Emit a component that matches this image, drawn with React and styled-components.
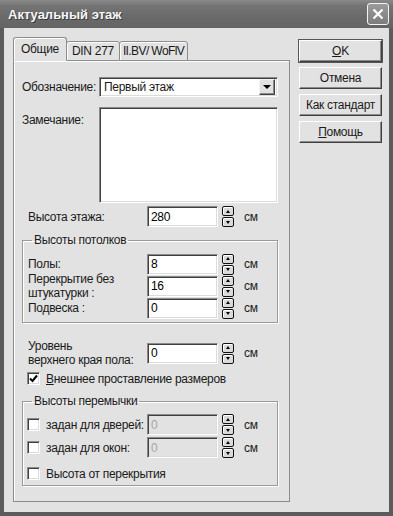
import React from 'react';
import styled, {createGlobalStyle} from 'styled-components';

const bg = '#e2e2e2';
const font = '"Liberation Sans", Arial, sans-serif';

const GlobalStyle = createGlobalStyle`
  html, body {
    margin: 0;
    padding: 0;
    background: #ffffff;
  }
  * {
    box-sizing: border-box;
  }
`;

const Window = styled.div`
  width: 393px;
  height: 516px;
  display: flex;
  flex-direction: column;
  background: #5c5c5c;
  font-family: ${font};
  font-size: 12px;
  letter-spacing: -0.3px;
  color: #1a1a1a;
  overflow: hidden;
`;

const TitleBar = styled.div`
  height: 28px;
  flex: none;
  display: flex;
  align-items: center;
  justify-content: space-between;
  padding: 0 4px 0 8px;
  background: linear-gradient(#8a8a8a 0%, #747474 20%, #6a6a6a 60%, #646464 100%);
`;

const Title = styled.div`
  font-weight: bold;
  font-size: 13px;
  letter-spacing: 0;
  color: #f6f6f6;
  text-shadow: 1px 1px 0 #3c3c3c;
`;

const CloseButton = styled.div`
  width: 22px;
  height: 22px;
  border: 1px solid #f4f4f4;
  border-radius: 3px;
  background: linear-gradient(#9a9a9a, #7c7c7c);
  display: flex;
  align-items: center;
  justify-content: center;
`;

const Client = styled.div`
  flex: 1;
  margin: 0 4px 4px 4px;
  background: ${bg};
  display: flex;
  gap: 9px;
  padding: 10px 7px 10px 9px;
`;

const TabArea = styled.div`
  width: 277px;
  display: flex;
  flex-direction: column;
`;

const TabStrip = styled.div`
  display: flex;
  align-items: flex-end;
  height: 23px;
  position: relative;
  z-index: 1;
  margin-bottom: -1px;
`;

const Tab = styled.div`
  height: ${p => (p.$active ? '24px' : '20px')};
  padding: 0 ${p => p.$px}px;
  margin-left: ${p => (p.$active ? '0' : '-1px')};
  display: flex;
  align-items: center;
  letter-spacing: ${p => p.$ls || '-0.3px'};
  background: ${bg};
  border: 1px solid #8c8c8c;
  border-bottom: ${p => (p.$active ? `1px solid ${bg}` : '1px solid #8c8c8c')};
  border-radius: 3px 3px 0 0;
  box-shadow: inset 1px 1px 0 #ffffff;
`;

const Panel = styled.div`
  flex: 1;
  border: 1px solid #8c8c8c;
  box-shadow: inset 1px 1px 0 #ffffff;
  padding: 16px 11px 0 8px;
  display: flex;
  flex-direction: column;
`;

const TopRow = styled.div`
  display: flex;
  align-items: ${p => (p.$top ? 'flex-start' : 'center')};
  margin-top: ${p => p.$mt || 0}px;
`;

const TopLabel = styled.div`
  width: 77px;
  flex: none;
  padding-top: ${p => (p.$top ? '6px' : '0')};
`;

const sunken = `
  border: 1px solid;
  border-color: #8a8a8a #ffffff #ffffff #8a8a8a;
  box-shadow: inset 1px 1px 0 #404040, inset -1px -1px 0 #dcdcdc;
`;

const Select = styled.div`
  flex: 1;
  height: 20px;
  ${sunken};
  background: #fff;
  display: flex;
  align-items: center;
  justify-content: space-between;
  padding: 0 2px 0 4px;
`;

const DropButton = styled.div`
  width: 16px;
  height: 16px;
  background: ${bg};
  border: 1px solid;
  border-color: #f4f4f4 #404040 #404040 #f4f4f4;
  box-shadow: inset -1px -1px 0 #8a8a8a;
  display: flex;
  align-items: center;
  justify-content: center;
  &::after {
    content: '';
    border-left: 4px solid transparent;
    border-right: 4px solid transparent;
    border-top: 4px solid #000;
  }
`;

const NoteBox = styled.div`
  flex: 1;
  height: 96px;
  ${sunken};
  background: #fff;
`;

const Row = styled.div`
  display: flex;
  align-items: center;
  height: ${p => p.$h || 21}px;
  margin-top: ${p => p.$mt || 0}px;
`;

const Label = styled.div`
  width: ${p => p.$w || 119}px;
  padding-left: ${p => p.$pl || 0}px;
  flex: none;
  line-height: ${p => p.$lh || 14}px;
`;

const NumInput = styled.div`
  width: 71px;
  height: 21px;
  ${sunken};
  background: ${p => (p.$disabled ? bg : '#fff')};
  color: ${p => (p.$disabled ? '#a6a6a6' : '#000')};
  padding: 0 3px;
  display: flex;
  align-items: center;
`;

const Spinner = styled.div`
  width: 12px;
  height: 21px;
  margin-left: 4px;
  display: flex;
  flex-direction: column;
  gap: 1px;
`;

const SpinHalf = styled.div`
  flex: 1;
  background: #dadada;
  border: 1px solid #111;
  border-radius: 2px;
  box-shadow: inset 1px 1px 0 #ffffff;
  display: flex;
  align-items: center;
  justify-content: center;
  &::after {
    content: '';
    border-left: 2px solid transparent;
    border-right: 2px solid transparent;
    ${p => (p.$down ? 'border-top: 3px solid #000;' : 'border-bottom: 3px solid #000;')}
  }
`;

const Unit = styled.span`
  margin-left: 10px;
`;

const Group = styled.fieldset`
  margin: ${p => p.$mt}px 0 0 0;
  padding: 6px 4px ${p => p.$pb}px 4px;
  border: 1px solid #9a9a9a;
  box-shadow: inset 1px 1px 0 #ffffff, 1px 1px 0 #ffffff;
  min-width: 0;
`;

const Legend = styled.legend`
  padding: 0 2px;
  margin-left: 5px;
  line-height: 14px;
`;

const CheckRow = styled.div`
  display: flex;
  align-items: center;
  height: ${p => p.$h || 13}px;
  margin-top: ${p => p.$mt || 0}px;
  padding-left: ${p => p.$pl || 0}px;
`;

const Box = styled.div`
  width: 13px;
  height: 13px;
  flex: none;
  ${sunken};
  background: #fff;
  display: flex;
  align-items: center;
  justify-content: center;
`;

const CheckLabel = styled.div`
  margin-left: 6px;
  width: ${p => (p.$w ? `${p.$w}px` : 'auto')};
  flex: none;
`;

const Buttons = styled.div`
  width: 83px;
  display: flex;
  flex-direction: column;
  gap: 5px;
  padding-top: 2px;
`;

const Button = styled.div`
  height: 22px;
  background: ${bg};
  border: 1px solid;
  border-color: #ffffff #404040 #404040 #ffffff;
  box-shadow: inset -1px -1px 0 #8a8a8a, ${p => (p.$default ? '0 0 0 1px #555' : '0 0 0 0 transparent')};
  display: flex;
  align-items: center;
  justify-content: center;
`;

const U = styled.span`
  text-decoration: underline;
`;

function Spin() {
  return (
    <Spinner>
      <SpinHalf />
      <SpinHalf $down />
    </Spinner>
  );
}

function Check({checked}) {
  return (
    <Box>
      {checked && (
        <svg width="9" height="9" viewBox="0 0 9 9">
          <path d="M1 4.5 L3.5 7 L8 1.5" stroke="#000" strokeWidth="2" fill="none" />
        </svg>
      )}
    </Box>
  );
}

function NumberField({label, value, disabled, w, pl, h, lh, mt}) {
  return (
    <Row $h={h} $mt={mt}>
      <Label $w={w} $pl={pl} $lh={lh}>{label}</Label>
      <NumInput $disabled={disabled}>{value}</NumInput>
      <Spin />
      <Unit>см</Unit>
    </Row>
  );
}

export default function App() {
  return (
    <>
      <GlobalStyle />
      <Window>
        <TitleBar>
          <Title>Актуальный этаж</Title>
          <CloseButton>
            <svg width="12" height="12" viewBox="0 0 12 12">
              <path d="M1.5 1.5 L10.5 10.5 M10.5 1.5 L1.5 10.5" stroke="#fff" strokeWidth="2.2" />
            </svg>
          </CloseButton>
        </TitleBar>
        <Client>
          <TabArea>
            <TabStrip>
              <Tab $active $px={7}>Общие</Tab>
              <Tab $px={5}>DIN 277</Tab>
              <Tab $px={3} $ls="-0.6px">II.BV/ WoFlV</Tab>
            </TabStrip>
            <Panel>
              <TopRow>
                <TopLabel>Обозначение:</TopLabel>
                <Select>
                  <span>Первый этаж</span>
                  <DropButton />
                </Select>
              </TopRow>
              <TopRow $top $mt={10}>
                <TopLabel $top>Замечание:</TopLabel>
                <NoteBox />
              </TopRow>
              <NumberField label="Высота этажа:" value="280" w={125} pl={6} mt={3} />

              <Group $mt={6} $pb={3}>
                <Legend>Высоты потолков</Legend>
                <NumberField label="Полы:" value="8" w={120} pl={1} h={22} />
                <NumberField
                  label={<>Перекрытие без<br />штукатурки :</>}
                  value="16" w={120} pl={1} h={22} lh={14}
                />
                <NumberField label="Подвеска :" value="0" w={120} pl={1} h={22} />
              </Group>

              <NumberField
                label={<>Уровень<br />верхнего края пола:</>}
                value="0" w={125} pl={6} h={26} lh={14} mt={17}
              />

              <CheckRow $mt={6} $pl={5}>
                <Check checked />
                <CheckLabel><U>В</U>нешнее проставление размеров</CheckLabel>
              </CheckRow>

              <Group $mt={9} $pb={5}>
                <Legend>Высоты перемычки</Legend>
                <CheckRow $h={21}>
                  <Check />
                  <CheckLabel $w={101}>задан для дверей:</CheckLabel>
                  <NumInput $disabled>0</NumInput>
                  <Spin />
                  <Unit>см</Unit>
                </CheckRow>
                <CheckRow $h={21} $mt={2}>
                  <Check />
                  <CheckLabel $w={101}>задан для окон:</CheckLabel>
                  <NumInput $disabled>0</NumInput>
                  <Spin />
                  <Unit>см</Unit>
                </CheckRow>
                <CheckRow $h={13} $mt={9}>
                  <Check />
                  <CheckLabel>Высота от перекрытия</CheckLabel>
                </CheckRow>
              </Group>
            </Panel>
          </TabArea>
          <Buttons>
            <Button $default><U>O</U>K</Button>
            <Button>Отмена</Button>
            <Button>Как стандарт</Button>
            <Button><U>П</U>омощь</Button>
          </Buttons>
        </Client>
      </Window>
    </>
  );
}
